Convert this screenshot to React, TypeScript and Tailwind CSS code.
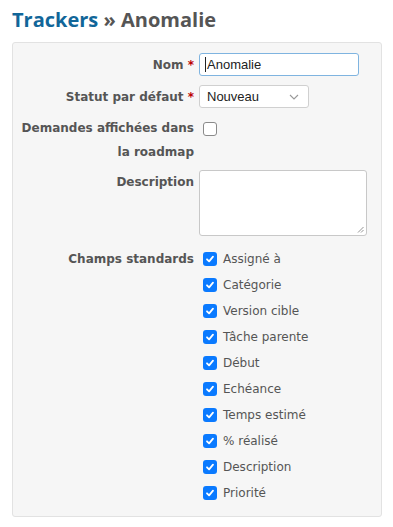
import React from "react";

const items = [
  "Assigné à",
  "Catégorie",
  "Version cible",
  "Tâche parente",
  "Début",
  "Echéance",
  "Temps estimé",
  "% réalisé",
  "Description",
  "Priorité",
];

function Checked() {
  return (
    <span className="flex h-[14px] w-[14px] shrink-0 items-center justify-center rounded-[3px] bg-[#0a7aff]">
      <svg width="10" height="10" viewBox="0 0 10 10">
        <path d="M2 5.3 L4.1 7.4 L8 2.6" fill="none" stroke="white" strokeWidth="1.8" strokeLinecap="round" strokeLinejoin="round" />
      </svg>
    </span>
  );
}

const labelCls = "w-[181px] shrink-0 flex flex-col items-end whitespace-nowrap text-[12px] font-bold";

export default function App() {
  return (
    <div className="min-h-[527px] bg-white px-[12px] pt-[8px] text-[#555]" style={{ fontFamily: '"DejaVu Sans", Verdana, sans-serif' }}>
      <h2 className="text-[20px] font-bold leading-[24px] text-[#555]" style={{ fontFamily: '"Open Sans", "Trebuchet MS", sans-serif' }}>
        <span className="text-[#169]">Trackers</span> » Anomalie
      </h2>
      <div className="mt-[10px] w-[370px] rounded-[3px] border border-[#e2e2e2] bg-[#f6f6f6] pb-[11px] pt-[10px]">
        {/* Nom */}
        <div className="flex items-center">
          <div className={labelCls}>
            <span>
              Nom <span className="text-[#bb0000]">*</span>
            </span>
          </div>
          <div className="ml-[5px] flex h-[23px] w-[160px] items-center rounded-[3px] border border-[#7fb4e0] bg-white pl-[5px] text-[13px] text-[#222]" style={{ fontFamily: '"Liberation Sans", Arial, sans-serif' }}>
            <span className="mr-[1px] h-[15px] w-px bg-[#222]" />
            Anomalie
          </div>
        </div>
        {/* Statut */}
        <div className="mt-[9px] flex items-center">
          <div className={labelCls}>
            <span>
              Statut par défaut <span className="text-[#bb0000]">*</span>
            </span>
          </div>
          <div className="ml-[5px] flex h-[23px] w-[110px] items-center justify-between rounded-[3px] border border-[#d0d0d0] bg-white pl-[7px] pr-[9px] text-[13px] text-[#222]" style={{ fontFamily: '"Liberation Sans", Arial, sans-serif' }}>
            <span>Nouveau</span>
            <svg width="10" height="6" viewBox="0 0 10 6">
              <path d="M1 1 L5 5 L9 1" fill="none" stroke="#999" strokeWidth="1.1" />
            </svg>
          </div>
        </div>
        {/* Demandes */}
        <div className="mt-[8px] flex items-start">
          <div className={`${labelCls} leading-[24px]`}>
            <span>Demandes affichées dans</span>
            <span>la roadmap</span>
          </div>
          <div className="ml-[9px] mt-[6px] h-[14px] w-[14px] rounded-[3px] border border-[#8a8a8a] bg-white" />
        </div>
        {/* Description */}
        <div className="mt-[6px] flex items-start">
          <div className={`${labelCls} leading-[24px]`}>Description</div>
          <div className="relative ml-[5px] h-[66px] w-[168px] rounded-[3px] border border-[#c8c8c8] bg-white">
            <svg className="absolute bottom-[2px] right-[2px]" width="7" height="7" viewBox="0 0 7 7">
              <path d="M1 6.5 L6.5 1 M4 6.5 L6.5 4" stroke="#888" strokeWidth="0.9" />
            </svg>
          </div>
        </div>
        {/* Champs standards */}
        <div className="mt-[11px] flex items-start">
          <div className={`${labelCls} leading-[24px]`}>Champs standards</div>
          <div className="ml-[9px] flex flex-col gap-[2px]">
            {items.map((it) => (
              <div key={it} className="flex h-[24px] items-center gap-[6px] text-[12px]">
                <Checked />
                <span>{it}</span>
              </div>
            ))}
          </div>
        </div>
      </div>
    </div>
  );
}
